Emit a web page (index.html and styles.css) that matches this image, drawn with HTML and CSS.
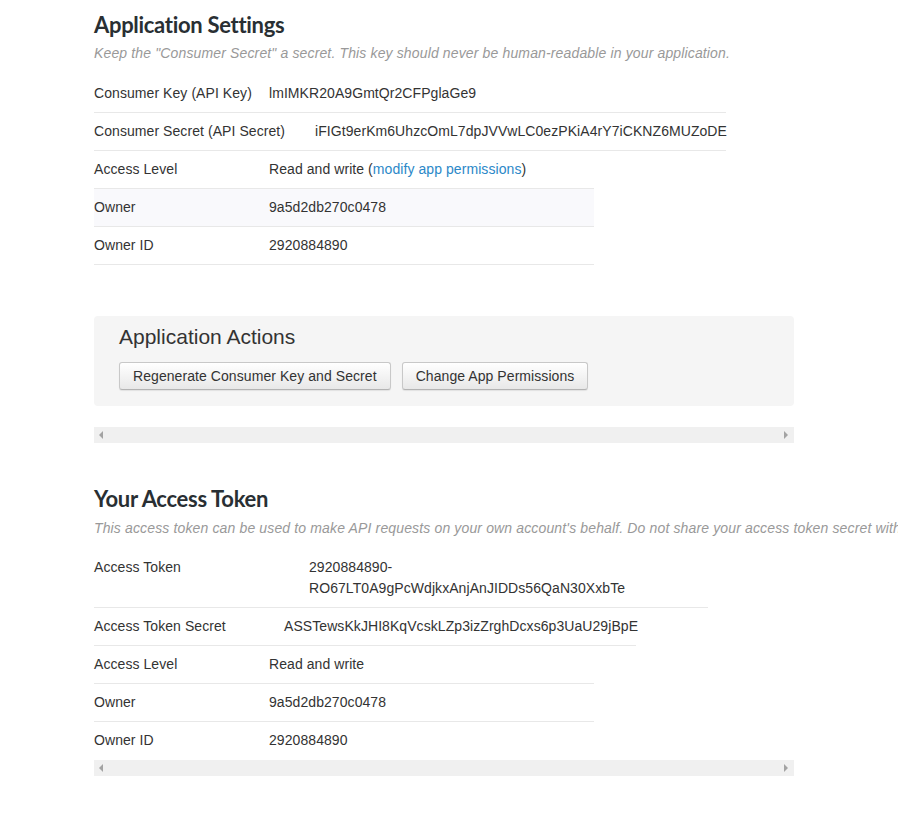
FILE: index.html
```html
<!DOCTYPE html>
<html>
<head>
<meta charset="utf-8">
<link rel="stylesheet" href="styles.css">
</head>
<body>
<div class="page">
  <section class="settings">
    <h2 class="section-title">Application Settings</h2>
    <p class="desc desc--first">Keep the "Consumer Secret" a secret. This key should never be human-readable in your application.</p>
    <div class="scroller">
      <div class="rows rows--first">
        <div class="row row--wide"><div class="label label--175">Consumer Key (API Key)</div><div class="value">lmIMKR20A9GmtQr2CFPglaGe9</div></div>
        <div class="row row--wide"><div class="label label--221">Consumer Secret (API Secret)</div><div class="value">iFIGt9erKm6UhzcOmL7dpJVVwLC0ezPKiA4rY7iCKNZ6MUZoDE</div></div>
        <div class="row"><div class="label">Access Level</div><div class="value">Read and write (<a class="link" href="#">modify app permissions</a>)</div></div>
        <div class="row row--shaded"><div class="label">Owner</div><div class="value">9a5d2db270c0478</div></div>
        <div class="row"><div class="label">Owner ID</div><div class="value">2920884890</div></div>
      </div>
      <div class="actions">
        <h3 class="actions-title">Application Actions</h3>
        <div class="buttons">
          <button class="btn">Regenerate Consumer Key and Secret</button>
          <button class="btn">Change App Permissions</button>
        </div>
      </div>
    </div>
    <div class="hscroll"><span class="arrow arrow--left"></span><span class="arrow arrow--right"></span></div>
  </section>

  <section class="token">
    <h2 class="section-title section-title--second">Your Access Token</h2>
    <p class="desc desc--second">This access token can be used to make API requests on your own account's behalf. Do not share your access token secret with anyone.</p>
    <div class="rows rows--second">
      <div class="row row--token row--tall"><div class="label label--215">Access Token</div><div class="value value--wrap">2920884890-RO67LT0A9gPcWdjkxAnjAnJIDDs56QaN30XxbTe</div></div>
      <div class="row row--secret"><div class="label label--190">Access Token Secret</div><div class="value">ASSTewsKkJHI8KqVcskLZp3izZrghDcxs6p3UaU29jBpE</div></div>
      <div class="row"><div class="label">Access Level</div><div class="value">Read and write</div></div>
      <div class="row"><div class="label">Owner</div><div class="value">9a5d2db270c0478</div></div>
      <div class="row row--last"><div class="label">Owner ID</div><div class="value">2920884890</div></div>
    </div>
    <div class="hscroll hscroll--second"><span class="arrow arrow--left"></span><span class="arrow arrow--right"></span></div>
  </section>
</div>
</body>
</html>
```

FILE: styles.css
```css
html, body {
  margin: 0;
  padding: 0;
  overflow: hidden;
  background: #fff;
}
body {
  font-family: "Liberation Sans", Arial, sans-serif;
  font-size: 14px;
  color: #333;
  letter-spacing: 0.07px;
}
.page {
  padding-left: 94px;
  width: 700px;
}
.section-title {
  font-family: Lato, "Open Sans", sans-serif;
  font-weight: 700;
  font-size: 22px;
  line-height: 26px;
  color: #292f33;
  margin: 12px 0 0;
  letter-spacing: -0.3px;
}
.section-title--second {
  margin-top: 43px;
}
.desc {
  font-style: italic;
  color: #999;
  line-height: 18px;
  margin: 6px 0 0;
  white-space: nowrap;
  letter-spacing: 0.14px;
}
.desc--second {
  margin-top: 7px;
}
.rows--first {
  margin-top: 13px;
}
.rows--second {
  margin-top: 19px;
}
.row {
  display: flex;
  box-sizing: border-box;
  width: 500px;
  height: 38px;
  padding-top: 8px;
  line-height: 20px;
  border-bottom: 1px solid #e8e8e8;
  white-space: nowrap;
}
.row--wide { width: 632px; }
.row--token { width: 614px; }
.row--secret { width: 542px; }
.row--shaded { background: #f9f9fc; }
.row--tall {
  height: 52px;
  padding-top: 1px;
  line-height: 21px;
}
.row--last { border-bottom-color: transparent; }
.label {
  flex: none;
  width: 175px;
}
.label--221 { width: 221px; }
.label--215 { width: 215px; }
.label--190 { width: 190px; }
.value {
  flex: 1;
}
.value--wrap {
  flex: none;
  width: 340px;
  white-space: normal;
}
.link {
  color: #2b88c8;
  text-decoration: none;
}
.actions {
  margin-top: 51px;
  width: 700px;
  box-sizing: border-box;
  background: #f5f5f5;
  border-radius: 4px;
  padding: 9px 25px 16px;
}
.actions-title {
  font-family: "Liberation Sans", Arial, sans-serif;
  font-weight: 400;
  font-size: 21px;
  line-height: 24px;
  color: #333;
  margin: 0;
  letter-spacing: 0;
}
.buttons {
  display: flex;
  gap: 11px;
  margin-top: 13px;
}
.btn {
  font-family: "Liberation Sans", Arial, sans-serif;
  font-size: 14px;
  letter-spacing: 0.07px;
  color: #333;
  height: 28px;
  padding: 0 13px;
  border: 1px solid #c8c8c8;
  border-bottom-color: #b3b3b3;
  border-radius: 3px;
  background: linear-gradient(#ffffff, #e8e8e8);
  box-shadow: 0 1px 1px rgba(0,0,0,0.08);
}
.hscroll {
  position: relative;
  margin-top: 21px;
  width: 700px;
  height: 16px;
  background: #f0f0f0;
}
.hscroll--second {
  margin-top: 0;
}
.arrow {
  position: absolute;
  top: 4px;
  width: 0;
  height: 0;
  border-top: 4px solid transparent;
  border-bottom: 4px solid transparent;
}
.arrow--left {
  left: 5px;
  border-right: 4px solid #a3a3a3;
}
.arrow--right {
  right: 6px;
  border-left: 4px solid #a3a3a3;
}
```
